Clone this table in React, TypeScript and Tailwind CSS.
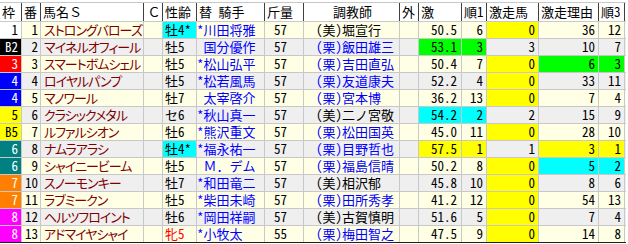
import React from "react";

type Row = {
  w: string;
  wc: string;
  n: number;
  name: string;
  sa: string;
  saHl?: string;
  j: string;
  kg: string;
  t: string;
  kuri: boolean;
  g: string;
  r1: string;
  gh: string;
  gr: string;
  r3: string;
  hl: { g?: string; r1?: string; gh?: string; gr?: string; r3?: string };
};

const hlClass: Record<string, string> = {
  y: "bg-[#ffff00]",
  g: "bg-[#00ff00]",
  c: "bg-[#00ffff]",
};

const rows: Row[] = [
  { w: "1", wc: "bg-white text-black", n: 1, name: "ストロングバローズ", sa: "牡4*", saHl: "c", j: "*川田将雅", kg: "57", t: "(美)堀宣行", kuri: false, g: "50.5", r1: "6", gh: "0", gr: "36", r3: "12", hl: { gh: "y" } },
  { w: "B2", wc: "bg-black text-white", n: 2, name: "マイネルオフィール", sa: "牡5", j: " 国分優作", kg: "57", t: "(栗)飯田雄三", kuri: true, g: "53.1", r1: "3", gh: "3", gr: "10", r3: "7", hl: { g: "g", r1: "g" } },
  { w: "3", wc: "bg-[#ff0000] text-white", n: 3, name: "スマートボムシェル", sa: "牡5", j: "*松山弘平", kg: "57", t: "(栗)吉田直弘", kuri: true, g: "50.4", r1: "7", gh: "0", gr: "6", r3: "3", hl: { gh: "y", gr: "g", r3: "g" } },
  { w: "4", wc: "bg-[#0000ff] text-white", n: 4, name: "ロイヤルパンプ", sa: "牡5", j: "*松若風馬", kg: "57", t: "(栗)友道康夫", kuri: true, g: "52.2", r1: "4", gh: "0", gr: "33", r3: "11", hl: { gh: "y" } },
  { w: "4", wc: "bg-[#0000ff] text-white", n: 5, name: "マノワール", sa: "牡7", j: " 太宰啓介", kg: "57", t: "(栗)宮本博", kuri: true, g: "36.2", r1: "13", gh: "0", gr: "7", r3: "4", hl: { gh: "y" } },
  { w: "5", wc: "bg-[#ffff00] text-black", n: 6, name: "クラシックメタル", sa: "セ6", j: "*秋山真一", kg: "57", t: "(美)二ノ宮敬", kuri: false, g: "54.2", r1: "2", gh: "2", gr: "15", r3: "9", hl: { g: "c", r1: "c" } },
  { w: "B5", wc: "bg-[#ffff00] text-black", n: 7, name: "ルファルシオン", sa: "牡6", j: "*熊沢重文", kg: "57", t: "(栗)松田国英", kuri: true, g: "45.0", r1: "11", gh: "0", gr: "28", r3: "10", hl: { gh: "y" } },
  { w: "6", wc: "bg-[#008080] text-white", n: 8, name: "ナムラアラシ", sa: "牡4*", saHl: "c", j: "*福永祐一", kg: "57", t: "(栗)目野哲也", kuri: true, g: "57.5", r1: "1", gh: "1", gr: "3", r3: "1", hl: { g: "y", r1: "y", gr: "y", r3: "y" } },
  { w: "6", wc: "bg-[#008080] text-white", n: 9, name: "シャイニービーム", sa: "牡5", j: " Ｍ．デム", kg: "57", t: "(栗)福島信晴", kuri: true, g: "50.2", r1: "8", gh: "0", gr: "5", r3: "2", hl: { gh: "y", gr: "c", r3: "c" } },
  { w: "7", wc: "bg-[#ff8000] text-white", n: 10, name: "スノーモンキー", sa: "牡7", j: "*和田竜二", kg: "57", t: "(美)相沢郁", kuri: false, g: "45.8", r1: "10", gh: "0", gr: "8", r3: "6", hl: { gh: "y" } },
  { w: "7", wc: "bg-[#ff8000] text-white", n: 11, name: "ラブミークン", sa: "牡5", j: "*柴田未崎", kg: "57", t: "(栗)田所秀孝", kuri: true, g: "41.2", r1: "12", gh: "0", gr: "54", r3: "13", hl: { gh: "y" } },
  { w: "8", wc: "bg-[#ff00ff] text-white", n: 12, name: "ヘルツフロイント", sa: "牡6", j: "*岡田祥嗣", kg: "57", t: "(美)古賀慎明", kuri: false, g: "51.6", r1: "5", gh: "0", gr: "7", r3: "4", hl: { gh: "y" } },
  { w: "8", wc: "bg-[#ff00ff] text-white", n: 13, name: "アドマイヤシャイ", sa: "牝5", j: "*小牧太", kg: "55", t: "(栗)梅田智之", kuri: true, g: "47.5", r1: "9", gh: "0", gr: "14", r3: "8", hl: { gh: "y" } },
];

// MS Gothic style: full-width kanji, half-width ascii
const mono = "[font-family:'Noto_Sans_Mono_CJK_JP','Liberation_Mono','Noto_Sans_CJK_JP',monospace]";
// MS PGothic style for horse names
const prop = "[font-family:'Noto_Sans_CJK_JP',sans-serif] [font-feature-settings:'palt'] tracking-[-1px]";

function Head({ w, children, className = "" }: { w: string; children?: React.ReactNode; className?: string }) {
  return (
    <div className={`${w} shrink-0 h-full border-r border-[#404040] pl-[2px] whitespace-pre ${className}`}>
      {children}
    </div>
  );
}

function Cell({ w, children, className = "" }: { w: string; children?: React.ReactNode; className?: string }) {
  return (
    <div className={`${w} shrink-0 h-full border-r border-[#c8c8c8] whitespace-pre ${className}`}>
      {children}
    </div>
  );
}

export default function App() {
  return (
    <div className={`w-[628px] h-[244px] bg-white pt-[2px] text-[13px] leading-[16px] text-black ${mono}`}>
      <div className="w-[626px] border-t border-[#c8c8c8]">
        <div className="flex h-[19px] items-stretch border-b border-[#c8c8c8] bg-white leading-[18px]">
          <Head w="w-[22px]">枠</Head>
          <Head w="w-[19px]">番</Head>
          <Head w="w-[103px]">馬名Ｓ</Head>
          <Head w="w-[19px]" className="text-center pl-0">Ｃ</Head>
          <Head w="w-[34px]">性齢</Head>
          <Head w="w-[68px]" className="pl-0">替 騎手</Head>
          <Head w="w-[39px]">斤量</Head>
          <Head w="w-[96px]" className="text-center">調教師</Head>
          <Head w="w-[19px]">外</Head>
          <Head w="w-[43px]">激</Head>
          <Head w="w-[25px]">順1</Head>
          <Head w="w-[52px]">激走馬</Head>
          <Head w="w-[60px]">激走理由</Head>
          <Head w="w-[26px]">順3</Head>
        </div>
        {rows.map((r, i) => {
          const bg = i % 2 === 0 ? "bg-[#ffffe6]" : "bg-[#efefef]";
          const h = (k: keyof Row["hl"]) => (r.hl[k] ? hlClass[r.hl[k]!] : "");
          return (
            <div
              key={r.n}
              className={`flex h-[17px] items-stretch border-b ${i === rows.length - 1 ? "border-[#202020]" : "border-[#c8c8c8]"} ${bg}`}
            >
              <Cell w="w-[22px]" className={`${r.wc} text-right pr-[3px]`}>{r.w}</Cell>
              <Cell w="w-[19px]" className="text-right pr-[2px]">{r.n}</Cell>
              <Cell w="w-[103px]" className={`pl-[3px] text-[#800000] ${prop}`}>
                {r.name}
              </Cell>
              <Cell w="w-[19px]" />
              <Cell
                w="w-[34px]"
                className={`pl-[2px] ${r.saHl ? hlClass[r.saHl] : ""} ${r.sa === "牝5" ? "text-[#ff0000]" : ""}`}
              >
                {r.sa}
              </Cell>
              <Cell w="w-[68px]" className="text-[#0000ff]">{r.j}</Cell>
              <Cell w="w-[39px]" className="pl-[9px]">{r.kg}</Cell>
              <Cell w="w-[96px]" className={`pl-[12px] ${r.kuri ? "text-[#0000ff]" : ""}`}>{r.t}</Cell>
              <Cell w="w-[19px]" />
              <Cell w="w-[43px]" className={`text-right pr-[4px] ${h("g")}`}>{r.g}</Cell>
              <Cell w="w-[25px]" className={`text-right pr-[3px] ${h("r1")}`}>{r.r1}</Cell>
              <Cell w="w-[52px]" className={`text-right pr-[3px] ${h("gh")}`}>{r.gh}</Cell>
              <Cell w="w-[60px]" className={`text-right pr-[3px] ${h("gr")}`}>{r.gr}</Cell>
              <Cell w="w-[26px]" className={`text-right pr-[3px] ${h("r3")}`}>{r.r3}</Cell>
            </div>
          );
        })}
      </div>
    </div>
  );
}
